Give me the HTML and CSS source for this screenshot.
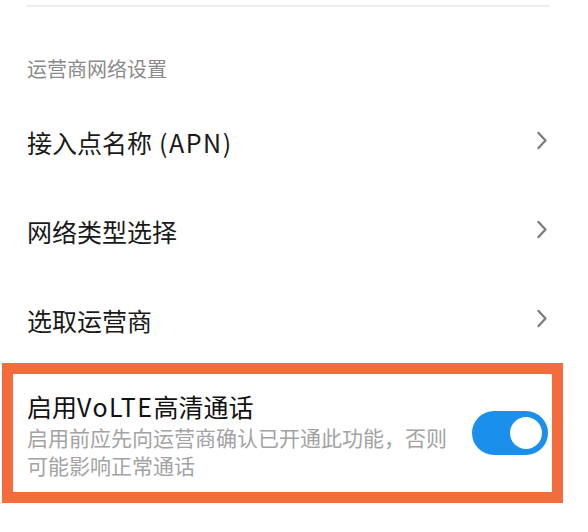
FILE: index.html
```html
<!DOCTYPE html>
<html lang="zh-CN">
<head>
    <meta charset="UTF-8">
    <meta name="viewport" content="width=device-width, initial-scale=1.0">
    <title>运营商网络设置</title>
    <link rel="stylesheet" href="styles.css">
</head>
<body>
    <div class="settings">
        <div class="divider"></div>

        <div class="section-title">运营商网络设置</div>

        <div class="list">
            <div class="row">
                <span class="row-label">接入点名称<span class="latin"> (APN)</span></span>
                <svg class="chevron" width="12" height="19" viewBox="0 0 12 19">
                    <path d="M2.5 2 L9.5 9.5 L2.5 17" fill="none" stroke="#7d7d7d" stroke-width="2.4" stroke-linecap="round" stroke-linejoin="round"/>
                </svg>
            </div>
            <div class="row">
                <span class="row-label">网络类型选择</span>
                <svg class="chevron" width="12" height="19" viewBox="0 0 12 19">
                    <path d="M2.5 2 L9.5 9.5 L2.5 17" fill="none" stroke="#7d7d7d" stroke-width="2.4" stroke-linecap="round" stroke-linejoin="round"/>
                </svg>
            </div>
            <div class="row">
                <span class="row-label">选取运营商</span>
                <svg class="chevron" width="12" height="19" viewBox="0 0 12 19">
                    <path d="M2.5 2 L9.5 9.5 L2.5 17" fill="none" stroke="#7d7d7d" stroke-width="2.4" stroke-linecap="round" stroke-linejoin="round"/>
                </svg>
            </div>
        </div>

        <!-- 高亮的 VoLTE 开关 -->
        <div class="highlight">
            <div class="switch-row">
                <div class="switch-text">
                    <div class="switch-title">启用<span class="latin">VoLTE</span>高清通话</div>
                    <div class="switch-desc">启用前应先向运营商确认已开通此功能，否则可能影响正常通话</div>
                </div>
                <div class="toggle on">
                    <div class="knob"></div>
                </div>
            </div>
        </div>
    </div>
</body>
</html>
```

FILE: styles.css
```css
body {
    margin: 0;
    background-color: #fff;
    font-family: "Noto Sans CJK SC", "Noto Sans", sans-serif;
    color: #1a1a1a;
}

.settings {
    width: 588px;
    padding-top: 5px;
}

.divider {
    height: 2px;
    margin: 0 38px 0 26px;
    background-color: #eeeeee;
}

.section-title {
    padding: 48px 0 14px 27px;
    font-size: 20px;
    line-height: 28px;
    color: #8a8a8a;
}

.list {
    padding: 0 40px 0 27px;
}

.row {
    display: flex;
    justify-content: space-between;
    align-items: center;
    height: 89px;
}

.row-label {
    font-size: 25px;
    line-height: 34px;
}

/* 拉丁字母略宽一些 */
.latin {
    letter-spacing: 1.5px;
}

.chevron {
    display: block;
    margin-top: -3px;
}

/* 橙色高亮框 */
.highlight {
    width: 561px;
    margin: -1px 0 0 2px;
    border: 11px solid #f46b3c;
    box-sizing: border-box;
}

.switch-row {
    display: flex;
    justify-content: space-between;
    align-items: center;
    padding: 15px 4px 13px 14px;
}

.switch-text {
    width: 432px;
}

.switch-title {
    font-size: 25px;
    line-height: 34px;
    color: #111;
}

.switch-desc {
    font-size: 21px;
    line-height: 28px;
    color: #a3a3a3;
}

.toggle {
    position: relative;
    width: 76px;
    height: 44px;
    border-radius: 22px;
    background-color: #ccc;
    margin-top: -2px;
}

.toggle.on {
    background-color: #1b8fec;
}

.knob {
    position: absolute;
    top: 6px;
    right: 6px;
    width: 32px;
    height: 32px;
    border-radius: 50%;
    background-color: #fff;
}
```
